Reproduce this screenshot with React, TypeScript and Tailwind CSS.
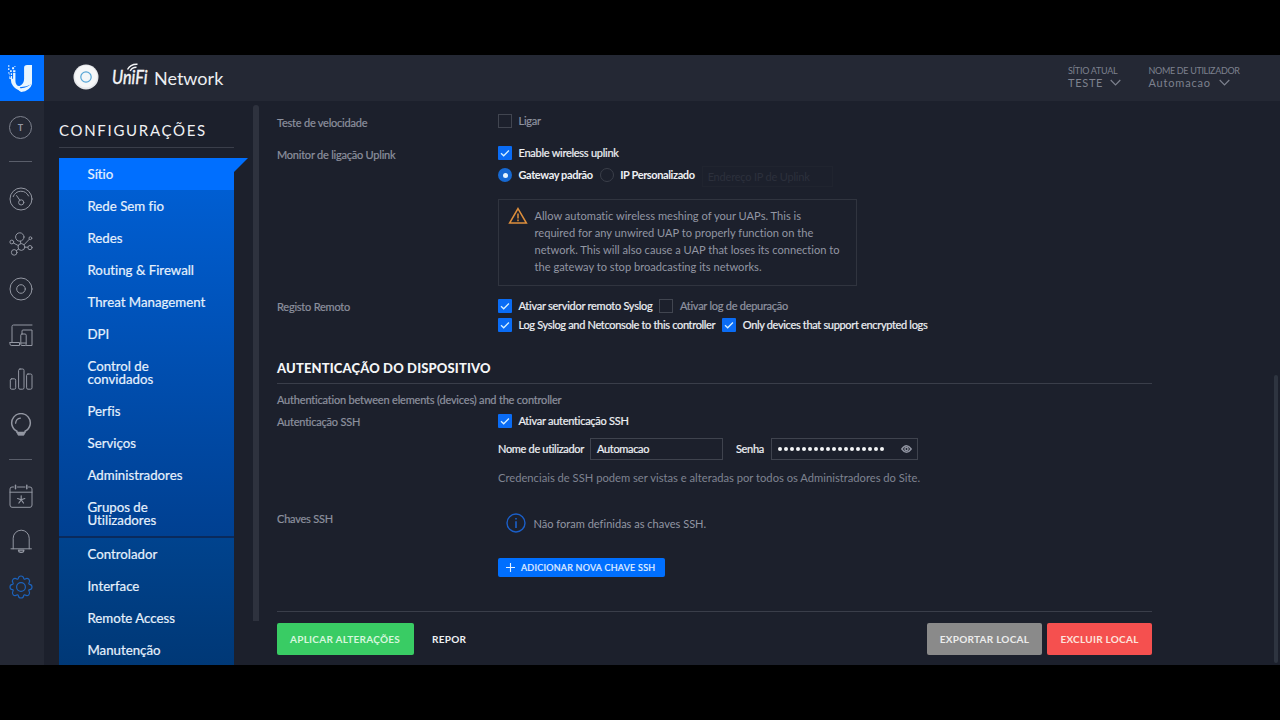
import type { ReactNode } from 'react';

function Icon({ className = '', children }: { className?: string; children: ReactNode }) {
  return (
    <svg
      viewBox="0 0 24 24"
      className={`h-6 w-6 shrink-0 ${className}`}
      fill="none"
      stroke="currentColor"
      strokeWidth="1"
      strokeLinecap="round"
      strokeLinejoin="round"
    >
      {children}
    </svg>
  );
}

function IconRail() {
  return (
    <aside className="flex w-11 shrink-0 flex-col items-start bg-[#242834] pl-[8.5px] text-[#9397a2]">
      <div className="mt-[15px] ml-[0.5px] flex h-[23px] w-[23px] items-center justify-center rounded-full border border-[#7e828e] text-[9px] font-bold">
        T
      </div>
      <div className="mt-[22px] ml-[0.5px] h-px w-[23px] bg-[#5a5e6a]" />
      <Icon className="mt-[25px]">
        <circle cx="12" cy="12" r="11" />
        <path d="M4.2 9.6a8.4 8.4 0 0 1 15.4-.6M7.6 8.6l3.2 4.6" />
        <circle cx="12.2" cy="15.4" r="2.6" />
      </Icon>
      <Icon className="mt-[21px]">
        <circle cx="10.8" cy="5" r="4.2" />
        <circle cx="12.4" cy="15" r="3.4" />
        <circle cx="2.8" cy="10" r="1.9" />
        <circle cx="21.4" cy="6.2" r="1.4" />
        <circle cx="21" cy="15.6" r="2.1" />
        <circle cx="5.2" cy="20.4" r="2.8" />
        <path d="M11.4 9.2l.4 2.4M4.5 11l4.8 2.6M20.3 7.3l-5.2 5.4M15.8 15.2h3.1M7.4 18.6l2.2-1.7" />
      </Icon>
      <Icon className="mt-[21px]">
        <circle cx="12" cy="12" r="11" />
        <circle cx="12" cy="12" r="4.3" />
      </Icon>
      <Icon className="mt-[22px]">
        <path d="M23 2H4.5Q3 2 3 3.5v16M1 19.5h9.5v3H2.2Q1 22.5 1 21.2zM13 10.5V8q0-1 1-1h9v15.5h-5.5" />
        <rect x="11.8" y="11" width="5.4" height="11.5" rx="1.2" />
        <path d="M12 20h5" />
      </Icon>
      <Icon className="mt-[20px]">
        <rect x="1.3" y="11.8" width="5.4" height="10.4" rx="1.4" />
        <rect x="9.6" y="2" width="5.4" height="20.2" rx="1.4" />
        <rect x="17.6" y="7" width="5.4" height="15.2" rx="1.4" />
      </Icon>
      <Icon className="mt-[21.5px]">
        <path d="M8 19.6v-1.3a9.300 9.300 0 1 1 8 0v1.300z" strokeWidth="1.500" />
        <path d="M6.600 10.200a5.600 5.600 0 0 1 4.800-5" strokeWidth="1.300" />
        <path d="M8.200 20l1 2.200h5.600l1-2.200z" fill="currentColor" strokeWidth="0.800" />
      </Icon>
      <div className="mt-[22.5px] ml-[0.5px] h-px w-[23px] bg-[#5a5e6a]" />
      <Icon className="mt-[24px]">
        <path d="M4.500 3H3Q1 3 1 5v16q0 2.300 2 2.300h18q2 0 2-2.300V5q0-2-2-2h-1.500M8.500 3h7.500M1 8.200h22" />
        <path d="M6.500 1.300v3.400M17.800 1.300v3.400" strokeWidth="1.500" />
        <path
          d="M12.200 11.800v4M12.200 15.800l3.600-1.300M12.200 15.800l2.300 3.200M12.200 15.800l-2.300 3.200M12.200 15.800l-3.600-1.300"
          strokeWidth="1.200"
        />
      </Icon>
      <Icon className="mt-[21px]">
        <path d="M2 19.800h20.400M4.200 19.800V9.200a8 8 0 0 1 16 0v10.600" />
        <path d="M9.500 21.200a2.700 2.200 0 0 0 5.400 0z" strokeWidth="1.300" />
      </Icon>
      <Icon className="mt-[22px] text-[#1c63bd]">
        <path
          d="M9.300 3.400C9.500 1.900 10.600 1 12 1s2.500.9 2.700 2.400c.2.900.7 1 1.500.5 1.300-.8 2.600-.8 3.600.3s1.100 2.300.3 3.600c-.5.800-.4 1.300.5 1.500 1.500.2 2.400 1.300 2.400 2.700s-.9 2.500-2.400 2.700c-.9.200-1 .7-.5 1.500.8 1.300.7 2.600-.3 3.600s-2.300 1.100-3.600.3c-.8-.5-1.300-.4-1.500.5-.2 1.500-1.300 2.400-2.700 2.400s-2.500-.9-2.700-2.400c-.2-.9-.7-1-1.500-.5-1.300.8-2.600.7-3.600-.3s-1.100-2.300-.3-3.600c.5-.8.400-1.300-.5-1.500C1.900 14.500 1 13.400 1 12s.9-2.500 2.400-2.700c.9-.2 1-.7.500-1.500-.8-1.300-.7-2.600.3-3.600s2.300-1.100 3.600-.3c.8.5 1.300.4 1.500-.5z"
          strokeWidth="1.200"
        />
        <circle cx="12" cy="12" r="4.400" strokeWidth="1.200" />
      </Icon>
    </aside>
  );
}

function UbiquitiLogo() {
  return (
    <div className="flex h-[46px] w-11 shrink-0 items-center justify-center bg-[#006fff] pr-[4px]">
      <svg viewBox="0 0 73 81" className="h-[27px] w-[24.500px]" fill="#e9f6ff">
        <path d="M0 22h4v20h4V33h4v8h3V24h7v24q0 8 4 12q4 4 10 2q12-6 12-20V8q0-8 9-8h20v42q0 6-2 10q-6 8-20 12q-10 2-20 3q2 6 10 11q-20-2-30-15q-7-9-7-22z" />
        <path d="M73 51q-4 26-34 30q-8-4-10-10q22-1 32-8q8-5 12-12z" />
        <path d="M0 1h4v4H0zM0 10h4v5H0zM12 7h6v6h-6zM6 16h5v5H6zM15 16h7v6h-7zM8 25h4v5H8zM19 3h3v3h-3z" />
      </svg>
    </div>
  );
}

function Chevron() {
  return (
    <svg viewBox="0 0 11 7" className="h-[7px] w-[11px]" fill="none" stroke="currentColor" strokeWidth="1.200">
      <path d="M.7 1l4.800 4.800L10.300 1" />
    </svg>
  );
}

function Header() {
  return (
    <header className="flex h-[46px] shrink-0 bg-[#242834]">
      <UbiquitiLogo />
      <svg viewBox="0 0 26 26" className="mt-[9px] ml-[28.500px] h-[26px] w-[26px]">
        <circle cx="13" cy="13" r="12.500" fill="#e6e8eb" />
        <circle cx="13" cy="12.500" r="11" fill="#f6f7f8" />
        <circle cx="13" cy="13" r="5.200" fill="#f3f6f8" stroke="#55a5d6" strokeWidth="1.200" />
      </svg>
      <div className="relative ml-[13px] flex w-[42.500px] pt-[10px] text-[18.500px] leading-6 text-[#f4f5f7]">
        <span className="origin-left scale-x-[0.880] italic [-webkit-text-stroke:0.400px_#f4f5f7]">UniFi</span>
        <svg
          viewBox="0 0 14 10"
          className="absolute top-[8px] left-[14px] h-[10px] w-[14px]"
          fill="none"
          stroke="currentColor"
          strokeWidth="1.500"
        >
          <path d="M1.500 6.500Q4.500.8 11.500 1.200M4.200 8Q6.200 4.200 10.500 4.300" />
        </svg>
      </div>
      <div className="pt-[10.500px] text-[18px] leading-6 text-[#eceef1]">Network</div>
      <div className="ml-auto flex pt-[9.500px] text-[#7d818e]">
        <div className="w-[80.500px]">
          <div className="text-[9px] leading-[12px] tracking-[-0.270px] whitespace-nowrap">SÍTIO ATUAL</div>
          <div className="flex items-center gap-[7px] text-[11px] leading-[12px] tracking-[0.700px]">
            TESTE
            <Chevron />
          </div>
        </div>
        <div className="w-[131.500px]">
          <div className="text-[9px] leading-[12px] tracking-[-0.330px] whitespace-nowrap">NOME DE UTILIZADOR</div>
          <div className="flex items-center gap-[8px] text-[11px] leading-[12px] tracking-[0.800px]">
            Automacao
            <Chevron />
          </div>
        </div>
      </div>
    </header>
  );
}

const siteItems: ReactNode[] = [
  'Rede Sem fio',
  'Redes',
  'Routing & Firewall',
  'Threat Management',
  'DPI',
  <>
    Control de
    <br />
    convidados
  </>,
  'Perfis',
  'Serviços',
  'Administradores',
  <>
    Grupos de
    <br />
    Utilizadores
  </>,
];

const controllerItems = ['Controlador', 'Interface', 'Remote Access', 'Manutenção'];

function NavItem({ children }: { children: ReactNode }) {
  return <li className="py-[9.500px] pl-[28.500px] leading-[13px]">{children}</li>;
}

function SettingsNav() {
  return (
    <nav className="ml-[15px] flex w-[175px] shrink-0 flex-col text-[13.250px] text-[#e6f1fd]">
      <h1 className="mt-[20px] h-[27px] shrink-0 border-b border-[#3a3e4a] text-[15px] leading-[18px] tracking-[1.700px] text-[#f0f1f4]">
        CONFIGURAÇÕES
      </h1>
      <div className="mt-[10px] shrink-0 [-webkit-text-stroke:0.200px_#e6f1fd]">
        <div className="relative h-8 bg-[#006fff] pt-[9.500px] pl-[28.500px] leading-[13px]">
          Sítio
          <svg viewBox="0 0 14 14" className="absolute top-0 left-full h-[14px] w-[14px]" fill="#006fff">
            <path d="M0 0h14L0 14z" />
          </svg>
        </div>
        <ul className="bg-linear-to-b from-[#005ed2] to-[#004091]">
          {siteItems.map((item, i) => (
            <NavItem key={i}>{item}</NavItem>
          ))}
        </ul>
        <ul className="border-t-2 border-[#0a2a5c] bg-linear-to-b from-[#00438e] to-[#003876]">
          {controllerItems.map((item) => (
            <NavItem key={item}>{item}</NavItem>
          ))}
        </ul>
      </div>
    </nav>
  );
}

function Checkbox({ checked = false, tight = false, label }: { checked?: boolean; tight?: boolean; label: string }) {
  return (
    <label className="flex h-[14px] items-center gap-[6.500px] whitespace-nowrap">
      {checked ? (
        <span className="flex h-[14px] w-[14px] items-center justify-center rounded-[1px] bg-[#0a6cf5]">
          <svg viewBox="0 0 14 14" className="h-[14px] w-[14px]" fill="none" stroke="#d5f0ff" strokeWidth="1.300">
            <path d="M3 7.200l2.700 2.600 5.200-5.300" />
          </svg>
        </span>
      ) : (
        <span className="h-[14px] w-[14px] border border-[#414550]" />
      )}
      <span
        className={`-mt-px leading-[14px] ${tight ? 'tracking-[-0.330px]' : 'tracking-[-0.260px]'} ${
          checked
            ? 'text-[#eef0f4] [-webkit-text-stroke:0.200px_#eef0f4]'
            : 'text-[#8f93a0] [-webkit-text-stroke:0.200px_#8f93a0]'
        }`}
      >
        {label}
      </span>
    </label>
  );
}

function Radio({ checked = false, label }: { checked?: boolean; label: string }) {
  return (
    <label className="flex items-center gap-[6.500px] whitespace-nowrap">
      {checked ? (
        <span className="flex h-[14px] w-[14px] items-center justify-center rounded-full bg-[#1769d2]">
          <span className="h-[5px] w-[5px] rounded-full bg-[#e8f6ff]" />
        </span>
      ) : (
        <span className="h-[14px] w-[14px] rounded-full border border-[#3a3e49]" />
      )}
      <span className="font-bold tracking-[-0.390px] text-[#eef0f4]">{label}</span>
    </label>
  );
}

function Field({ label, className, children }: { label: string; className: string; children: ReactNode }) {
  return (
    <section className={`grid grid-cols-[221px_1fr] ${className}`}>
      <div className="leading-[14px] tracking-[-0.220px] text-[#8c909e] [-webkit-text-stroke:0.200px_#8c909e]">
        {label}
      </div>
      <div>{children}</div>
    </section>
  );
}

function SettingsForm() {
  return (
    <main className="ml-[18px] flex w-[875px] shrink-0 flex-col text-[11px]">
      <Field label="Teste de velocidade" className="mt-[13px] h-8 *:first:pt-[2px]">
        <Checkbox label="Ligar" />
      </Field>

      <Field label="Monitor de ligação Uplink" className="h-[153px] *:first:pt-[2px]">
        <Checkbox checked label="Enable wireless uplink" />
        <div className="mt-[4px] flex h-[22px] items-center gap-[7px] leading-[14px]">
          <Radio checked label="Gateway padrão" />
          <Radio label="IP Personalizado" />
          <div className="mt-[3px] h-[21px] w-[131px] border border-[#20242f] pl-[5px] leading-[20px] tracking-[-0.200px] text-[#2c303c]">
            Endereço IP de Uplink
          </div>
        </div>
        <div className="mt-[13px] flex h-[87px] w-[359px] border border-[#30343f] pt-[7px] pl-[9px]">
          <svg viewBox="0 0 20 18" className="h-[18px] w-5" fill="none" stroke="#dd8e3c" strokeWidth="1.500">
            <path d="M10 1.600L18.400 16H1.600z" />
            <path d="M10 6.400v5M10 12.600v1.600" />
          </svg>
          <p className="ml-[6.500px] text-[11.120px] leading-[17px] whitespace-nowrap text-[#9296a3]">
            Allow automatic wireless meshing of your UAPs. This is
            <br />
            required for any unwired UAP to properly function on the
            <br />
            network. This will also cause a UAP that loses its connection to
            <br />
            the gateway to stop broadcasting its networks.
          </p>
        </div>
      </Field>

      <Field label="Registo Remoto" className="h-[33px] *:first:pt-px">
        <div className="flex gap-[7px]">
          <Checkbox checked label="Ativar servidor remoto Syslog" />
          <Checkbox label="Ativar log de depuração" />
        </div>
        <div className="mt-[5px] flex gap-[7px]">
          <Checkbox checked tight label="Log Syslog and Netconsole to this controller" />
          <Checkbox checked tight label="Only devices that support encrypted logs" />
        </div>
      </Field>

      <h2 className="mt-7 h-6 border-b border-[#3a3e4a] text-[13px] leading-4 font-black tracking-[0.150px] text-[#f4f5f7]">
        AUTENTICAÇÃO DO DISPOSITIVO
      </h2>
      <p className="mt-[9px] leading-[14px] tracking-[-0.190px] text-[#8c909e] [-webkit-text-stroke:0.200px_#8c909e]">
        Authentication between elements (devices) and the controller
      </p>

      <Field label="Autenticação SSH" className="mt-[7px] h-[97px] *:first:pt-px">
        <Checkbox checked label="Ativar autenticação SSH" />
        <div className="mt-[10px] flex h-[22px] items-center tracking-[-0.320px] whitespace-nowrap text-[#eef0f4] [-webkit-text-stroke:0.200px_#eef0f4]">
          <span className="w-[92px]">Nome de utilizador</span>
          <div className="h-[22px] w-[133px] border border-[#3f434e] pl-[6px] leading-[20px]">Automacao</div>
          <span className="ml-[13px] w-[35px]">Senha</span>
          <div className="flex h-[22px] w-[147px] items-center justify-between border border-[#3f434e] pr-[5px] pl-[6px]">
            <span className="flex gap-[2px]">
              {Array.from({ length: 18 }, (_, i) => (
                <span key={i} className="h-[4px] w-[4px] rounded-full bg-[#f4f5f7]" />
              ))}
            </span>
            <svg viewBox="0 0 11 8" className="h-2 w-[11px]" fill="none" stroke="#8f93a0" strokeWidth="1.400">
              <path d="M.8 4Q3 .8 5.500.8T10.200 4Q8 7.200 5.500 7.200T.8 4z" />
              <circle cx="5.500" cy="4" r="1.600" />
            </svg>
          </div>
        </div>
        <p className="mt-[10.500px] text-[11.190px] leading-[14px] whitespace-nowrap text-[#7f8391]">
          Credenciais de SSH podem ser vistas e alteradas por todos os Administradores do Site.
        </p>
      </Field>

      <Field label="Chaves SSH" className="h-[101px] border-b border-[#3a3e4a] *:first:pt-px">
        <div className="mt-[2px] ml-[8px] flex h-5 items-center gap-[7.500px] text-[11.050px] text-[#9296a3]">
          <svg viewBox="0 0 20 20" className="h-5 w-5" fill="none" stroke="#1b5fc9" strokeWidth="1.400">
            <circle cx="10" cy="10" r="9" />
            <path d="M10 5v1.600M10 8.200v6.800" strokeWidth="1.600" />
          </svg>
          <span className="pt-[2px]">Não foram definidas as chaves SSH.</span>
        </div>
        <button className="mt-[25px] flex h-[19px] w-[166.500px] items-center rounded-[2px] bg-[#006fff] pl-[8px] text-[9px] tracking-[0.250px] whitespace-nowrap text-[#e4f1ff] [-webkit-text-stroke:0.200px_#e4f1ff]">
          <svg viewBox="0 0 9 9" className="mr-[6px] h-[9px] w-[9px]" stroke="currentColor" strokeWidth="1.100">
            <path d="M4.500 0v9M0 4.500h9" />
          </svg>
          ADICIONAR NOVA CHAVE SSH
        </button>
      </Field>

      <div className="mt-[11px] flex h-8 text-[10px] font-bold tracking-[0.260px] whitespace-nowrap">
        <button className="w-[137px] rounded-[2px] bg-[#39cc64] pr-px text-[#d6f7dd]">APLICAR ALTERAÇÕES</button>
        <button className="ml-[18px] text-[#eef0f4]">REPOR</button>
        <button className="ml-auto w-[115px] rounded-[2px] bg-[#8a8a8a] text-[#ececec]">EXPORTAR LOCAL</button>
        <button className="ml-[5px] w-[105px] rounded-[2px] bg-[#f5504f] text-[#fde3dc]">EXCLUIR LOCAL</button>
      </div>
    </main>
  );
}

export default function App() {
  return (
    <div className="h-[720px] w-[1280px] overflow-hidden bg-black py-[55px] font-['Lato',sans-serif] [font-variant-ligatures:none]">
      <div className="flex h-[610px] flex-col bg-[#1c202c]">
        <Header />
        <div className="flex h-[564px] overflow-hidden">
          <IconRail />
          <SettingsNav />
          <div className="mt-[4px] ml-[19px] h-[516px] w-[6px] rounded-t-full bg-[#2e323e]" />
          <SettingsForm />
          <div className="mt-[274px] mr-[2px] ml-auto h-[288px] w-[4px] rounded-full bg-[#2e3440]" />
        </div>
      </div>
    </div>
  );
}
